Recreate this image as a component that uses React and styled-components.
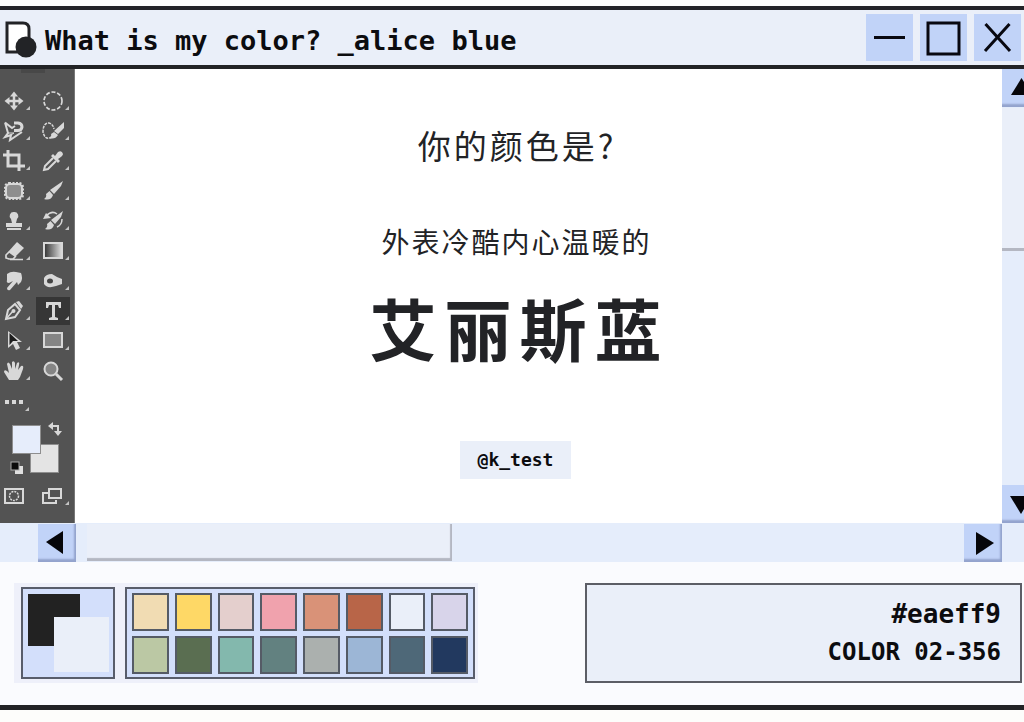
import React from "react";
import styled, { createGlobalStyle, css } from "styled-components";

const ink = "#222326";
const alice = "#eaeff9";

const GlobalStyle = createGlobalStyle`
  *, *::before, *::after { box-sizing: border-box; }
  body { margin: 0; background: #fdfdfb; color: ${ink}; }
  button { border: 0; padding: 0; margin: 0; background: none; color: inherit; font: inherit; }
  h1, h2, p { margin: 0; }
  svg { display: block; }
`;

const pixelFont = css`
  font-family: "DejaVu Sans Mono", "Liberation Mono", monospace;
  font-weight: 700;
  color: #0c0c0f;
`;

const Page = styled.div`
  min-height: 100vh;
  display: flex;
  flex-direction: column;
  padding: 6px 0 12px;
  overflow: hidden;
`;

const Window = styled.main`
  flex: 1;
  display: flex;
  flex-direction: column;
  border-top: 4px solid ${ink};
  border-bottom: 5px solid ${ink};
  background: #fafbfe;
`;

const TitleBar = styled.header`
  display: flex;
  align-items: center;
  height: 59px;
  padding: 0 3px 0 5px;
  background: ${alice};
  border-bottom: 4px solid ${ink};
`;

const WindowTitle = styled.h1`
  ${pixelFont}
  flex: 1;
  margin-left: 8px;
  padding-top: 6px;
  font-size: 27px;
  line-height: 40px;
  white-space: nowrap;
`;

const TitleIcon = styled.svg`
  margin-top: 4px;
`;

const WindowControls = styled.div`
  display: flex;
  gap: 7px;
`;

const ControlButton = styled.button`
  width: 47px;
  height: 47px;
  background: #c1d3f8;
`;

const Workspace = styled.div`
  flex: 1;
  display: flex;
  min-height: 454px;
`;

const Toolbar = styled.aside`
  flex: none;
  width: 75px;
  background: #535353;
  border-right: 1px solid #777;
`;

const Grip = styled.div`
  width: 24px;
  height: 4px;
  margin: 0 0 14px 21px;
  background: #484848;
`;

const ToolGrid = styled.div`
  display: grid;
  grid-template-columns: 36px 34px;
  grid-auto-rows: 28px;
  row-gap: 2px;
`;

const ToolButton = styled.button`
  color: #d8d8d8;
  background: ${(p) => (p.$active ? "#363636" : "transparent")};
  &:nth-child(even) { padding-left: 3px; }
`;

const ColorWell = styled.div`
  position: relative;
  height: 54px;
  margin-top: 6px;
`;

const WellSwatch = styled.button`
  position: absolute;
  left: ${(p) => p.$x}px;
  top: ${(p) => p.$y}px;
  width: 29px;
  height: 29px;
  background: ${(p) => p.$color};
  border: 1px solid #8e8e8e;
`;

const WellIcon = styled.button`
  position: absolute;
  left: ${(p) => p.$x}px;
  top: ${(p) => p.$y}px;
`;

const ModeRow = styled.div`
  display: grid;
  grid-template-columns: 36px 34px;
  margin-top: 7px;
`;

const Paper = styled.section`
  flex: 1;
  display: flex;
  flex-direction: column;
  align-items: center;
  padding: 56px 46px 44px 0;
  background: #fff;
  font-family: "Noto Sans CJK SC", sans-serif;
  text-align: center;
`;

const Question = styled.p`
  padding-left: 3px;
  font-size: 33px;
  line-height: 40px;
  letter-spacing: 3px;
`;

const Lead = styled.p`
  margin-top: 56px;
  padding-left: 2px;
  font-size: 28px;
  line-height: 40px;
  letter-spacing: 2px;
`;

const ColorName = styled.h2`
  margin-top: 26px;
  padding-left: 8px;
  font-size: 67px;
  font-weight: 700;
  line-height: 80px;
  letter-spacing: 8px;
`;

const Handle = styled.a`
  ${pixelFont}
  margin-top: 74px;
  padding: 0 18px;
  font-size: 18px;
  line-height: 38px;
  text-decoration: none;
  background: ${alice};
`;

const VerticalScroll = styled.div`
  flex: none;
  width: 22px;
  display: flex;
  flex-direction: column;
  overflow: hidden;
  background: #e5edfb;
`;

const HorizontalScroll = styled.div`
  display: flex;
  height: 39px;
  padding: 1px 22px 1px 38px;
  background: #e5edfb;
`;

const ScrollButton = styled.button`
  flex: none;
  width: 38px;
  height: 38px;
  background: #c1d3f8;
  box-shadow: inset -2px -3px 2px #93a3cd;
`;

const VerticalThumb = styled.div`
  height: 143px;
  margin-top: 1px;
  margin-bottom: auto;
  background: ${alice};
  border-bottom: 3px solid #b4b7c2;
`;

const HorizontalThumb = styled.div`
  width: 365px;
  height: 37px;
  margin-left: 11px;
  margin-right: auto;
  background: ${alice};
  box-shadow: inset -2px -3px 1px #b4b7c2;
`;

const Footer = styled.footer`
  display: flex;
  align-items: flex-start;
  justify-content: space-between;
  padding: 21px 2px 22px 14px;
`;

const PaletteTray = styled.div`
  display: flex;
  gap: 10px;
  padding: 4px 3px 4px 7px;
  background: #eef0fa;
`;

const CurrentColors = styled.div`
  width: 94px;
  height: 92px;
  padding: 5px 0 0 5px;
  border: 2px solid #585d6b;
  background: #d3dffb;
`;

const SwatchBox = styled.div`
  display: grid;
  grid-template-columns: repeat(8, 1fr);
  grid-auto-rows: 38px;
  gap: 5px 6px;
  width: 350px;
  height: 92px;
  padding: 4px 5px;
  border: 2px solid #585d6b;
  background: #d3dffb;
`;

const Swatch = styled.button`
  background: ${(p) => p.$color};
  border: 2px solid #555b66;
`;

const InfoBox = styled.div`
  ${pixelFont}
  width: 437px;
  height: 100px;
  padding: 10px 19px;
  border: 2px solid #5c5e66;
  background: ${alice};
  text-align: right;
  line-height: 38px;
`;

const HexCode = styled.p`
  font-size: 26px;
`;

const ColorCode = styled.p`
  font-size: 24px;
`;

function DocumentIcon() {
  return (
    <TitleIcon width="32" height="38" viewBox="0 0 32 38" aria-hidden="true">
      <path d="M2 2H18Q24 2 24 8V31H2Z" fill="#fff" stroke={ink} strokeWidth="3" />
      <circle cx="21" cy="26" r="10.500" fill={ink} />
    </TitleIcon>
  );
}

const controls = [
  ["Minimise", <path d="M8 23.500H39" />],
  ["Maximise", <rect x="8" y="9" width="31" height="31" />],
  ["Close", <path d="M11.500 10L36 37M35.500 10L11 37" />],
];

const arrows = {
  up: "M9 26L19.500 9L30 26Z",
  down: "M8 11H30L19 29Z",
  left: "M8 18L25 7V30Z",
  right: "M12 8L30 19L12 31Z",
};

function Arrow({ dir }) {
  return (
    <ScrollButton aria-label={`Scroll ${dir}`}>
      <svg width="38" height="38"><path d={arrows[dir]} fill="#06060a" /></svg>
    </ScrollButton>
  );
}

const line = { fill: "none", stroke: "currentColor", strokeWidth: 2 };
const solid = { fill: "currentColor" };

const tools = [
  ["Move", <>
    <path {...line} strokeWidth="2.500" d="M14 7V21M7 14H21" />
    <path {...solid} d="M14 4.500L18 9.500H10ZM14 23.500L10 18.500H18ZM4.500 14L9.500 10V18ZM23.500 14L18.500 18V10Z" />
  </>],
  ["Elliptical marquee", <circle {...line} strokeWidth="1.700" strokeDasharray="4 1.800" cx="14" cy="14" r="9" />],
  ["Magnetic lasso", <>
    <path {...line} d="M5 5.500L12 11L15 9M5 5.500L8 16L5 20L11 18L10 23L19 17L22 15" />
    <path {...line} strokeWidth="3" d="M14 6H18Q22 6.500 22 10Q21.500 13.500 18 13.500H14" />
    <path {...line} strokeWidth="1" d="M8 16L14 16L11 18" />
  </>],
  ["Quick selection", <>
    <path {...line} strokeWidth="1.500" strokeDasharray="3 1" d="M13 20Q6 24 4 15Q4 6 10 6Q14 7 15 12" />
    <path {...solid} d="M25 5L25 11L19 17L15 14ZM15 15L19 18Q16 23 10 21Q13 19 12 17Z" />
  </>],
  ["Crop", <path {...line} strokeWidth="3" d="M3 8H19V24M8 3V19H25" />],
  ["Eyedropper", <>
    <path {...line} d="M14 11L6 19L5 23L9 22L17 14" />
    <path {...solid} d="M12 9L14 7L16 9L19 5Q23 3 24 7Q24 9 19 12L21 14L19 16Z" />
  </>],
  ["Patch", <>
    <rect x="6" y="7" width="16" height="14" rx="4" fill="#8e8e8e" stroke="currentColor" strokeWidth="2" />
    <rect x="5" y="6" width="18" height="16" rx="4" fill="none" stroke="currentColor" strokeWidth="2" strokeDasharray="2 1.500" />
  </>],
  ["Brush", <path {...solid} d="M24 4L22 9L15 17L11 13ZM10.500 14L14 18Q12 24 5 22Q8 20 7 17Z" />],
  ["Clone stamp", <path {...solid} d="M14 5A4 4 0 0 1 17 12L16 16H22V20H6V16H12L11 12A4 4 0 0 1 14 5ZM7 21H21V23H7Z" />],
  ["History brush", <>
    <path {...solid} d="M24 4L22 10L16 17L12 13ZM11.500 14L15 18Q13 24 6 22Q9 20 8 17ZM4 12L7 6L12 11Z" />
    <path {...line} strokeWidth="1.500" d="M7 9Q13 3 18 7M23 12Q23 18 18 20" />
  </>],
  ["Eraser", <>
    <path {...solid} d="M17 5L24 11L15 20L8 15Z" />
    <path {...line} strokeWidth="1.700" d="M9 15L6 18V21L9 22H13L16 19M10 22.500H23" />
  </>],
  ["Gradient", <>
    <defs><linearGradient id="toolGradient"><stop stopColor="#303030" /><stop offset="1" stopColor="#e0e0e0" /></linearGradient></defs>
    <rect x="5" y="6" width="18" height="15" fill="url(#toolGradient)" stroke="currentColor" strokeWidth="2" />
  </>],
  ["Smudge", <path {...solid} d="M7 7Q11 4 16 5L21 6Q23 11 21 15L18 18L17 15L10 23Q7 24 7 21L13 14L9 16Q6 16 7 13Z" />],
  ["Sponge", <>
    <path {...solid} d="M5 11Q7 7 13 7L18 10L23 12V17L17 19Q8 22 5 17Z" />
    <ellipse cx="11" cy="14" rx="3" ry="2.500" fill="#444" />
  </>],
  ["Pen", <>
    <path {...line} d="M6 22L8 13L15 7L20 13L15 20Z" />
    <path {...line} strokeWidth="1.500" d="M6 22L13 14" />
    <circle {...solid} cx="13.500" cy="14" r="2" />
    <path {...solid} d="M16 5L19 4L23 9L21 12Z" />
  </>],
  ["Type", <path {...solid} d="M7 5H22V11H20L19 8H16V20L19 21V23H10V21L13 20V8H10L9 11H7Z" />],
  ["Path selection", <>
    <path d="M8 4V21L13 17L16 23L20 21L17 15H22Z" fill="currentColor" />
    <path d="M9.500 6V18L13 14H18Z" fill="#1c1c1c" />
  </>],
  ["Rectangle", <rect x="5" y="6" width="18" height="14" fill="#858585" stroke="currentColor" strokeWidth="2" />],
  ["Hand", <path {...solid} d="M9 23L4 15Q4 12 7 14L9 16L7 7Q8 4 10 7L12 12V5Q14 3 15 6V12L17 6Q20 4 19 8L18 13L21 9Q24 8 23 12L20 20L18 23Z" />],
  ["Zoom", <>
    <circle cx="12" cy="12" r="6.500" fill="#858585" stroke="currentColor" strokeWidth="2" />
    <path {...line} strokeWidth="3" d="M17 17L23 23" />
  </>],
  ["More tools", <path {...solid} d="M5 13H9V17H5ZM12 13H16V17H12ZM19 13H23V17H19Z" />],
];

function ToolIcon({ children, flyout = true, low = false }) {
  return (
    <svg width="31" height="28" viewBox="0 0 31 28" aria-hidden="true">
      {children}
      {flyout && <path d={low ? "M29 20V24H25Z" : "M30 19V23H26Z"} fill="#c4c4c4" />}
    </svg>
  );
}

const palette = [
  "#f1dcb3", "#fed866", "#e4cfcd", "#f0a2ad", "#d99278", "#b86548", "#eaeff9", "#d8d4ea",
  "#bbc8a4", "#5a6e51", "#83b8ad", "#628180", "#abb0ae", "#9cb6d6", "#4e6878", "#22395f",
];

export default function App() {
  return (
    <Page>
      <GlobalStyle />
      <Window>
        <TitleBar>
          <DocumentIcon />
          <WindowTitle>What is my color? _alice blue</WindowTitle>
          <WindowControls>
            {controls.map(([name, shape]) => (
              <ControlButton key={name} aria-label={name}>
                <svg width="47" height="47" fill="none" stroke="#080810" strokeWidth="3">{shape}</svg>
              </ControlButton>
            ))}
          </WindowControls>
        </TitleBar>

        <Workspace>
          <Toolbar aria-label="Tools">
            <Grip />
            <ToolGrid>
              {tools.map(([name, shape]) => (
                <ToolButton key={name} aria-label={name} $active={name === "Type"}>
                  <ToolIcon flyout={name !== "Zoom"} low={name === "More tools"}>{shape}</ToolIcon>
                </ToolButton>
              ))}
            </ToolGrid>
            <ColorWell>
              <WellSwatch aria-label="Background color" $x={30} $y={23} $color="#e4e4e4" />
              <WellSwatch aria-label="Foreground color" $x={12} $y={4} $color="#e6edfb" />
              <WellIcon aria-label="Swap colors" $x={48} $y={1}>
                <svg width="14" height="14" color="#d8d8d8">
                  <path {...line} d="M4 4H10V10" />
                  <path {...solid} d="M0 4L5 0V8ZM10 14L6 9H14Z" />
                </svg>
              </WellIcon>
              <WellIcon aria-label="Default colors" $x={10} $y={40}>
                <svg width="14" height="14">
                  <path d="M5 5H13V13H5Z" fill="#e0e0e0" />
                  <rect x="1" y="1" width="8" height="8" fill="#0c0c0c" stroke="#aaa" />
                </svg>
              </WellIcon>
            </ColorWell>
            <ModeRow>
              <ToolButton aria-label="Quick mask">
                <ToolIcon flyout={false}>
                  <rect {...line} x="5" y="7" width="18" height="14" />
                  <circle {...line} strokeDasharray="2 1" strokeWidth="1.500" cx="14" cy="14" r="4.500" />
                </ToolIcon>
              </ToolButton>
              <ToolButton aria-label="Screen mode">
                <ToolIcon>
                  <path {...line} d="M9 11H4V21H17V18" />
                  <rect {...line} x="10" y="7" width="12" height="9" />
                </ToolIcon>
              </ToolButton>
            </ModeRow>
          </Toolbar>

          <Paper>
            <Question>你的颜色是?</Question>
            <Lead>外表冷酷内心温暖的</Lead>
            <ColorName>艾丽斯蓝</ColorName>
            <Handle href="#k_test">@k_test</Handle>
          </Paper>

          <VerticalScroll>
            <Arrow dir="up" />
            <VerticalThumb />
            <Arrow dir="down" />
          </VerticalScroll>
        </Workspace>

        <HorizontalScroll>
          <Arrow dir="left" />
          <HorizontalThumb />
          <Arrow dir="right" />
        </HorizontalScroll>

        <Footer>
          <PaletteTray>
            <CurrentColors>
              <svg width="84" height="82" aria-label="Current colors">
                <rect width="52" height="52" fill="#222" />
                <rect x="26" y="23" width="55" height="55" fill={alice} />
              </svg>
            </CurrentColors>
            <SwatchBox>
              {palette.map((color) => (
                <Swatch key={color} $color={color} aria-label={color} />
              ))}
            </SwatchBox>
          </PaletteTray>
          <InfoBox>
            <HexCode>#eaeff9</HexCode>
            <ColorCode>COLOR 02-356</ColorCode>
          </InfoBox>
        </Footer>
      </Window>
    </Page>
  );
}
